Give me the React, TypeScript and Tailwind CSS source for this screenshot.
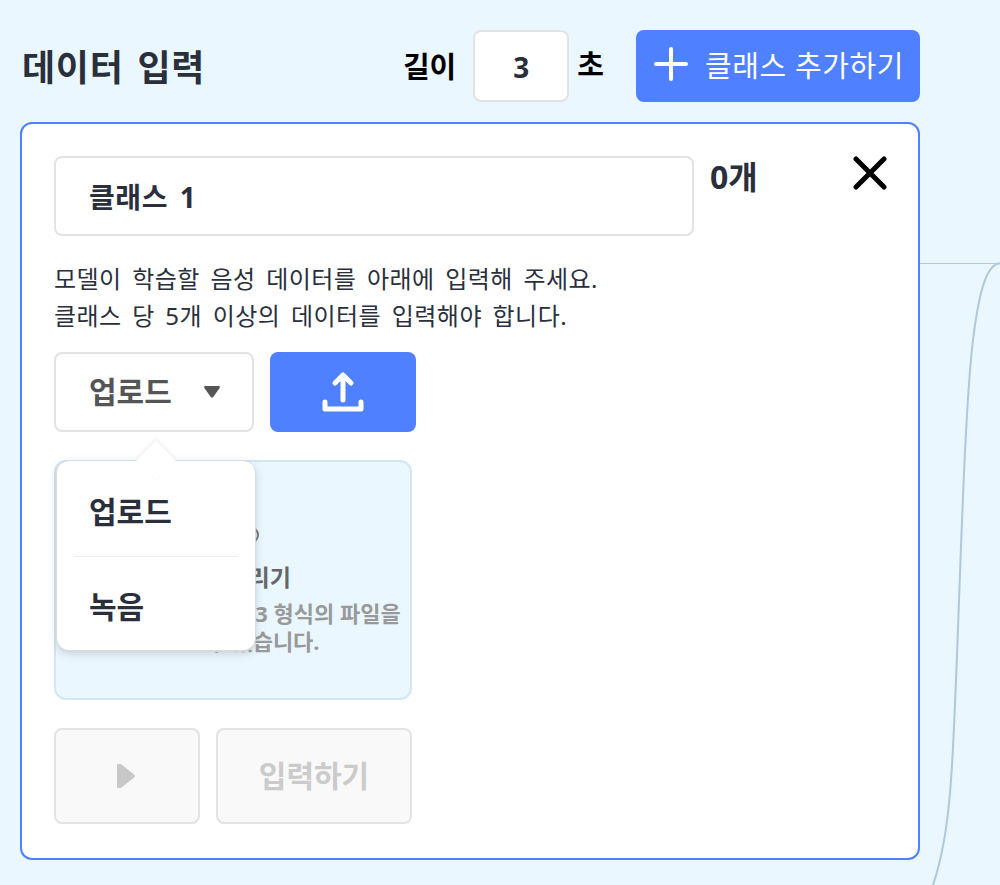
function Plus() {
  return (
    <svg width="34" height="34" viewBox="0 0 34 34" fill="none" stroke="#fff" strokeWidth="4" strokeLinecap="round">
      <path d="M17 2v30M2 17h30" />
    </svg>
  )
}

function Close() {
  return (
    <svg width="34" height="34" viewBox="0 0 34 34" fill="none" stroke="#000" strokeWidth="5" strokeLinecap="round">
      <path d="M3 3l28 28M31 3L3 31" />
    </svg>
  )
}

function UploadIcon() {
  return (
    <svg width="44" height="42" viewBox="0 0 44 42" fill="none" stroke="#fff" strokeWidth="5" strokeLinecap="round" strokeLinejoin="round">
      <path d="M22 29V4M14 12l8-8 8 8" />
      <path d="M4 31v7h36v-7" />
    </svg>
  )
}

export default function App() {
  return (
    <div className="relative h-[885px] w-[1000px] overflow-hidden bg-[#eaf7ff] font-['Noto_Sans','Noto_Sans_CJK_KR',sans-serif] text-[#2a2f3c] [word-spacing:0.24em]">
      <svg className="absolute left-0 top-0" width="1000" height="885" fill="none" stroke="#aec8dc" strokeWidth="2">
        <path d="M920 263.5H1000" strokeWidth="1" />
        <path d="M1000 263.5C985 263.5 978 300 973 340C962 430 958 690 951 780C949 810 945 850 933 885" />
      </svg>

      <div className="relative w-[900px] pl-5 pt-[30px] box-content">
        <div className="flex h-[72px] items-center">
          <h1 className="ml-[2px] mt-1 text-[36px] font-bold leading-none tracking-[0.02em]">데이터 입력</h1>
          <span className="ml-auto text-[29px] font-bold leading-none text-black">길이</span>
          <div className="ml-[17px] flex h-[72px] w-[96px] items-center justify-center rounded-lg border-2 border-[#e3e3e3] bg-white pt-[2px] text-[28px] font-bold">3</div>
          <span className="mb-[3px] ml-2 mr-8 text-[29px] font-bold leading-none text-black">초</span>
          <button className="flex h-[72px] w-[284px] items-center justify-center gap-[17px] rounded-lg bg-[#4f80ff] pb-1 pl-[2px] text-[29px] leading-none tracking-[0.02em] text-white">
            <Plus />
            <span className="mt-[2px]">클래스 추가하기</span>
          </button>
        </div>

        <div className="mt-5 w-[900px] rounded-xl border-2 border-[#4f80ff] bg-white px-8 pb-[34px] pt-8">
          <div className="flex items-start">
            <div className="flex h-20 w-[640px] items-center rounded-lg border-2 border-[#e3e3e3] pl-[33px] pt-[2px] text-[28px] font-bold leading-none tracking-[0.02em]">클래스 1</div>
            <span className="ml-4 text-[32px] font-bold leading-[42px]">0개</span>
            <div className="ml-auto mr-[-1px]"><Close /></div>
          </div>

          <p className="mt-6 text-[24px] leading-[37px] tracking-[0.02em]">
            모델이 학습할 음성 데이터를 아래에 입력해 주세요.
            <br />
            클래스 당 5개 이상의 데이터를 입력해야 합니다.
          </p>

          <div className="relative mt-[18px] flex gap-4">
            <div className="flex h-20 w-[200px] items-center rounded-lg border-2 border-[#e3e3e3] pl-[33px] text-[30px] font-bold leading-none text-[#555]">
              업로드
              <svg className="ml-auto mr-[32px]" width="16" height="12" viewBox="0 0 16 12">
                <path d="M1.5 0h13a1.3 1.3 0 0 1 1 2.2L9.2 11a1.6 1.6 0 0 1-2.4 0L.5 2.2A1.3 1.3 0 0 1 1.5 0z" fill="#555" />
              </svg>
            </div>
            <button className="flex h-20 w-[146px] items-center justify-center rounded-lg bg-[#4f80ff]">
              <UploadIcon />
            </button>

            <div className="absolute left-[3px] top-[109px] z-10 h-[189px] w-[198px] rounded-xl bg-white shadow-[0_1px_1px_1px_#d9d9d9,0_3px_10px_rgba(60,80,100,0.25)]">
              <div className="absolute left-[85px] top-[-15px] h-7 w-7 rotate-45 bg-white shadow-[-1px_-1px_3px_rgba(60,80,100,0.1)]" />
              <div className="relative flex h-[95px] items-center pl-8 pt-[6px] text-[30px] font-bold leading-none">업로드</div>
              <div className="relative mx-[17px] h-px bg-[#eeeeee]" />
              <div className="relative flex h-[95px] items-center pl-8 pt-1 text-[30px] font-bold leading-none">녹음</div>
            </div>
          </div>

          <div className="mt-7 flex h-[240px] w-[358px] flex-col items-center rounded-xl border-2 border-[#d5e6f2] bg-[#eaf7ff] pt-16 text-center">
            <svg width="52" height="18" viewBox="0 0 52 18" fill="none" stroke="#777" strokeWidth="2">
              <rect x="1" y="1" width="50" height="16" rx="8" />
            </svg>
            <div className="mt-[17px] text-[23px] font-bold leading-8 text-[#666]">파일 올리기</div>
            <div className="mt-[6px] whitespace-nowrap text-[22px] font-bold leading-7 text-[#999] [word-spacing:0]">
              <span className="ml-[58px] block">wav 또는 mp3 형식의 파일을</span>
              <span className="ml-[60px] block">수 있습니다.</span>
            </div>
          </div>

          <div className="mt-7 flex gap-4">
            <div className="flex h-24 w-[146px] items-center justify-center rounded-lg border-2 border-[#e3e3e3] bg-[#f9f9f9]">
              <svg className="mr-[2px]" width="18" height="24" viewBox="0 0 18 24"><path d="M1 0h3l13 10.5a2 2 0 0 1 0 3L4 24H1a1 1 0 0 1-1-1V1a1 1 0 0 1 1-1z" fill="#c8c8c8" /></svg>
            </div>
            <div className="flex h-24 w-[196px] items-center justify-center rounded-lg border-2 border-[#e3e3e3] bg-[#f9f9f9] text-[30px] font-bold leading-none text-[#cbcbcb]">입력하기</div>
          </div>
        </div>
      </div>
    </div>
  )
}
